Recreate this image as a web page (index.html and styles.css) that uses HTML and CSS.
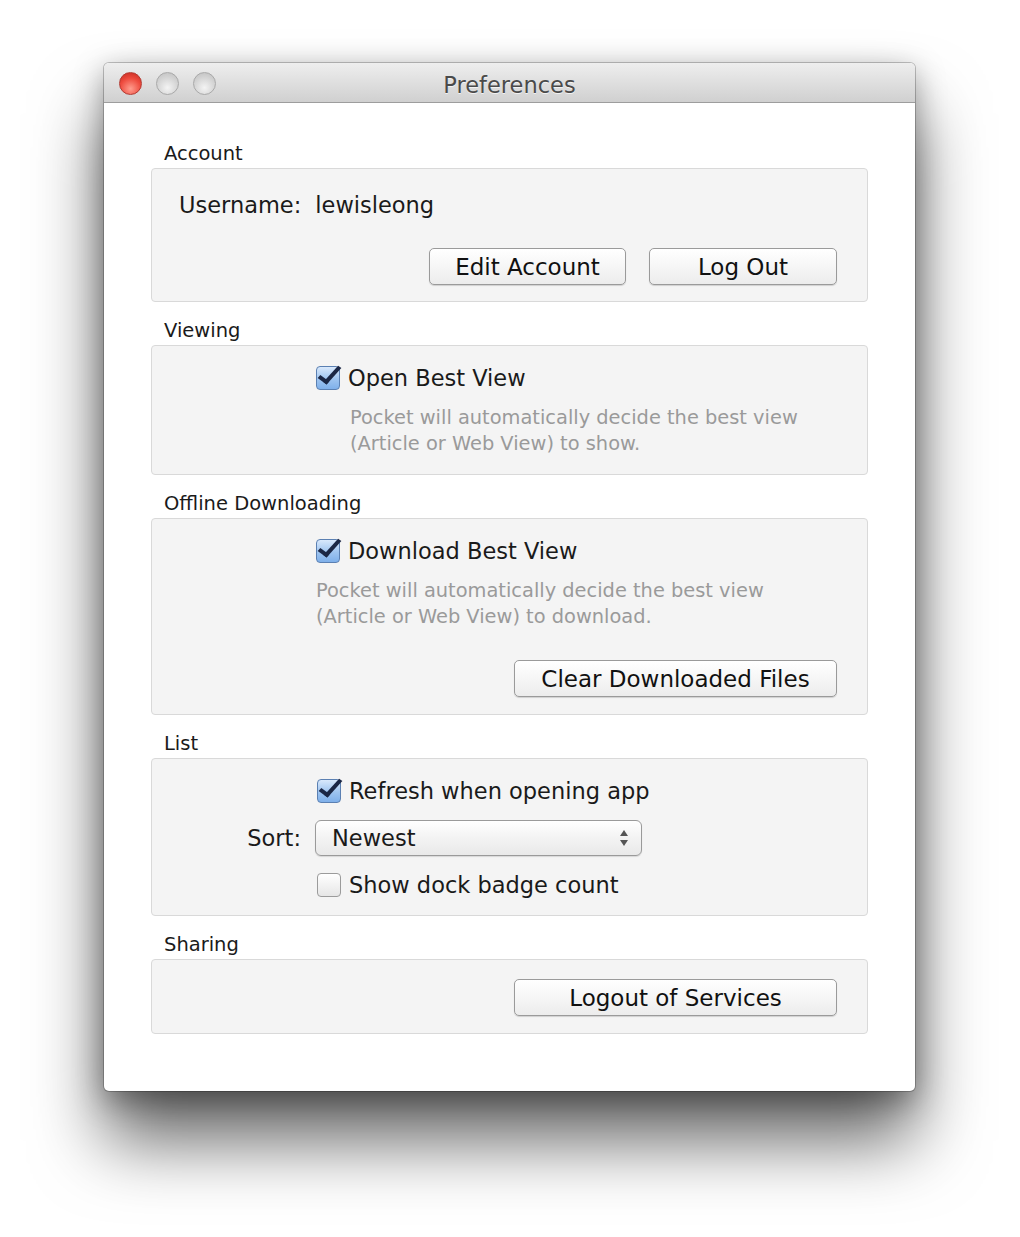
FILE: index.html
```html
<!DOCTYPE html>
<html>
<head>
  <title>Preferences</title>
  <link rel="stylesheet" href="styles.css">
</head>
<body>
  <div class="window">
    <div class="titlebar">
      <div class="lights">
        <span class="light red"></span>
        <span class="light"></span>
        <span class="light"></span>
      </div>
      <div class="title">Preferences</div>
    </div>
    <div class="content">
      <div class="section">
        <div class="section-label">Account</div>
        <div class="group account">
          <div class="username"><span>Username:</span><span>lewisleong</span></div>
          <div class="buttons">
            <button class="btn btn-edit">Edit Account</button>
            <button class="btn btn-logout">Log Out</button>
          </div>
        </div>
      </div>

      <div class="section">
        <div class="section-label">Viewing</div>
        <div class="group">
          <label class="option">
            <span class="checkbox checked"></span>
            <span>Open Best View</span>
          </label>
          <div class="desc desc-indent">Pocket will automatically decide the best view<br>(Article or Web View) to show.</div>
        </div>
      </div>

      <div class="section">
        <div class="section-label">Offline Downloading</div>
        <div class="group">
          <label class="option">
            <span class="checkbox checked"></span>
            <span>Download Best View</span>
          </label>
          <div class="desc">Pocket will automatically decide the best view<br>(Article or Web View) to download.</div>
          <div class="buttons">
            <button class="btn btn-wide">Clear Downloaded Files</button>
          </div>
        </div>
      </div>

      <div class="section">
        <div class="section-label">List</div>
        <div class="group list">
          <span></span>
          <label class="option-inline">
            <span class="checkbox checked"></span>
            <span>Refresh when opening app</span>
          </label>
          <span class="sort-label">Sort:</span>
          <div class="select">
            <span>Newest</span>
            <span class="arrows"></span>
          </div>
          <span></span>
          <label class="option-inline">
            <span class="checkbox"></span>
            <span>Show dock badge count</span>
          </label>
        </div>
      </div>

      <div class="section">
        <div class="section-label">Sharing</div>
        <div class="group sharing">
          <div class="buttons">
            <button class="btn btn-wide">Logout of Services</button>
          </div>
        </div>
      </div>
    </div>
  </div>
</body>
</html>
```

FILE: styles.css
```css
body {
  margin: 0;
  padding: 63px 0 146px 104px;
  background: #fff;
  font-family: "DejaVu Sans", Verdana, sans-serif;
  color: #1a1a1a;
}
.window {
  width: 811px;
  height: 1028px;
  background: #fff;
  border-radius: 5px;
  box-shadow: 0 0 0 1px rgba(0, 0, 0, 0.22), 0 50px 70px rgba(0, 0, 0, 0.6), 0 8px 30px rgba(0, 0, 0, 0.35);
  overflow: hidden;
}
.titlebar {
  height: 40px;
  box-sizing: border-box;
  display: flex;
  align-items: center;
  position: relative;
  background: linear-gradient(to bottom, #eeeeee, #d0d0d0);
  border-bottom: 1px solid #9d9d9d;
}
.lights {
  display: flex;
  gap: 14px;
  padding-left: 15px;
  padding-top: 2px;
}
.light {
  width: 23px;
  height: 23px;
  border-radius: 50%;
  box-sizing: border-box;
  border: 1px solid #a9a9a9;
  background: radial-gradient(circle at 50% 70%, #f4f4f4, #d2d2d2 60%, #bdbdbd);
}
.light.red {
  border-color: #b33a32;
  background: radial-gradient(circle at 50% 75%, #ff9d8e, #ee4b3e 55%, #c3271d);
}
.title {
  position: absolute;
  left: 0;
  right: 0;
  top: 9px;
  text-align: center;
  font-size: 22.5px;
  color: #4a4a4a;
  text-shadow: 0 1px 0 rgba(255, 255, 255, 0.7);
}
.content {
  padding: 40px 47px 0 47px;
}
.section-label {
  font-size: 19.5px;
  line-height: 22px;
  margin-left: 13px;
  margin-bottom: 3px;
}
.section + .section {
  margin-top: 18px;
}
.group {
  background: #f4f4f4;
  border: 1px solid #d9d9d9;
  border-radius: 4px;
  box-sizing: border-box;
  padding: 19px 30px 17px 164px;
}
.account {
  padding: 23px 30px 16px 27px;
}
.username {
  display: flex;
  gap: 14px;
  font-size: 22.5px;
  line-height: 26px;
}
.buttons {
  display: flex;
  justify-content: flex-end;
  gap: 23px;
  margin-top: 30px;
}
.sharing .buttons {
  margin-top: 0;
}
.btn {
  font-family: inherit;
  font-size: 23px;
  color: #111;
  height: 37px;
  padding: 0;
  border: 1px solid #9a9a9a;
  border-radius: 5px;
  background: linear-gradient(to bottom, #ffffff, #f6f6f6 50%, #ececec);
  box-shadow: 0 1px 1px rgba(0, 0, 0, 0.15);
}
.btn-edit {
  width: 197px;
}
.btn-logout {
  width: 188px;
}
.btn-wide {
  width: 323px;
}
.option, .option-inline {
  display: flex;
  align-items: center;
  gap: 8px;
  font-size: 22.5px;
  line-height: 26px;
  white-space: nowrap;
}
.checkbox {
  width: 24px;
  height: 24px;
  box-sizing: border-box;
  border: 1px solid #9b9b9b;
  border-radius: 4px;
  background: linear-gradient(to bottom, #ffffff, #e6e6e6);
  position: relative;
  flex: none;
}
.checkbox.checked {
  border-color: #5b80b2;
  background: linear-gradient(to bottom, #d9e9fc, #9ec4f0 55%, #7fb0ea);
}
.checkbox.checked::after {
  content: "";
  position: absolute;
  left: 7px;
  top: -5px;
  width: 7px;
  height: 18px;
  border: solid #1b2745;
  border-width: 0 4px 4px 0;
  transform: rotate(36deg) skewX(-6deg);
}
.desc {
  margin-top: 14px;
  font-size: 19.4px;
  line-height: 26px;
  color: #9a9a9a;
}
.desc-indent {
  margin-left: 34px;
}
.list {
  display: grid;
  grid-template-columns: 149px 1fr;
  column-gap: 14px;
  row-gap: 16px;
  align-items: center;
  padding: 19px 0 17px 0;
}
.list .option-inline {
  margin-left: 2px;
}
.sort-label {
  text-align: right;
  font-size: 22.5px;
}
.select {
  width: 327px;
  height: 36px;
  box-sizing: border-box;
  border: 1px solid #9a9a9a;
  border-radius: 6px;
  background: linear-gradient(to bottom, #ffffff, #f3f3f3 50%, #e9e9e9);
  box-shadow: 0 1px 1px rgba(0, 0, 0, 0.12);
  display: flex;
  align-items: center;
  justify-content: space-between;
  padding: 0 12px 0 16px;
  font-size: 22.5px;
}
.arrows {
  width: 9px;
  height: 18px;
  position: relative;
}
.arrows::before, .arrows::after {
  content: "";
  position: absolute;
  left: 0;
  border-left: 4px solid transparent;
  border-right: 4px solid transparent;
}
.arrows::before {
  top: 1px;
  border-bottom: 6px solid #555;
}
.arrows::after {
  bottom: 1px;
  border-top: 6px solid #555;
}
.sharing {
  padding: 19px 30px 17px 30px;
}
```
